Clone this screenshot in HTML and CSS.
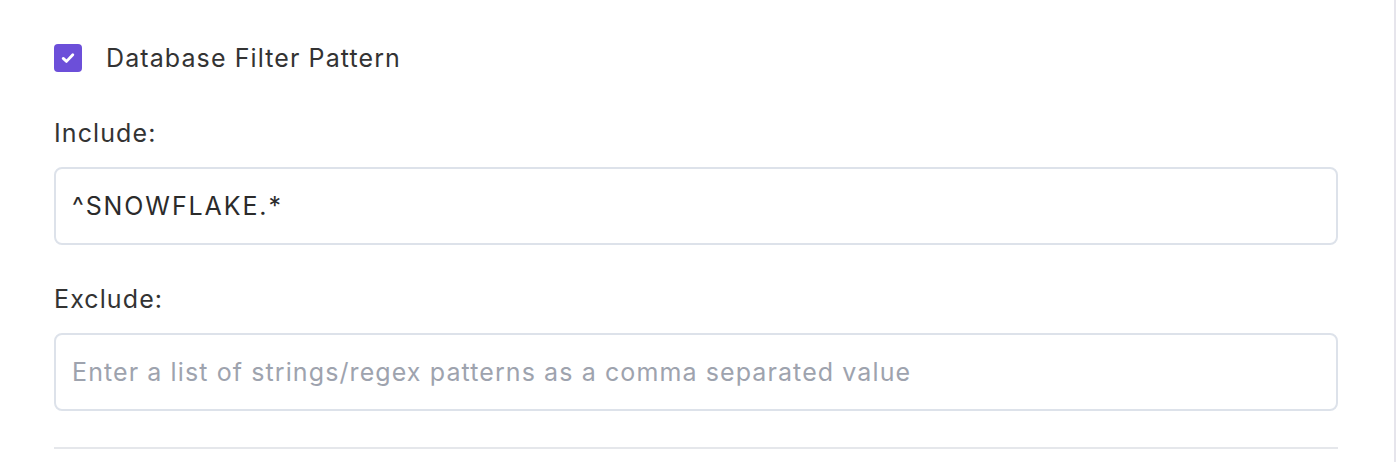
FILE: index.html
```html
<!DOCTYPE html>
<html>
<head>
<meta charset="utf-8">
<link rel="stylesheet" href="styles.css">
</head>
<body>
<div class="page">
  <div class="panel">
    <label class="check-row">
      <span class="checkbox">
        <svg width="16" height="16" viewBox="0 0 16 16"><path d="M3.2 8.4 L6.5 11.4 L12.8 4.8" fill="none" stroke="#fff" stroke-width="2.8" stroke-linecap="round" stroke-linejoin="round"/></svg>
      </span>
      <span class="check-label">Database Filter Pattern</span>
    </label>
    <div class="field">
      <div class="field-label">Include:</div>
      <div class="input"><span class="value">^SNOWFLAKE.*</span></div>
    </div>
    <div class="field">
      <div class="field-label">Exclude:</div>
      <div class="input"><span class="placeholder">Enter a list of strings/regex patterns as a comma separated value</span></div>
    </div>
    <div class="divider"></div>
  </div>
</div>
</body>
</html>
```
FILE: styles.css
```css
html, body {
  margin: 0;
  padding: 0;
  background: #ffffff;
}
body {
  font-family: Inter, "Liberation Sans", sans-serif;
  color: #333333;
  letter-spacing: 1.1px;
}
.page {
  width: 1394px;
  height: 462px;
  border-right: 2px solid #e6e5ec;
  box-sizing: content-box;
  overflow: hidden;
}
.panel {
  padding: 44px 56px 0 54px;
  display: flex;
  flex-direction: column;
}
.check-row {
  display: flex;
  align-items: center;
  gap: 24px;
  height: 28px;
}
.checkbox {
  width: 28px;
  height: 28px;
  border-radius: 4px;
  background: #6c4fd9;
  display: flex;
  align-items: center;
  justify-content: center;
}
.check-label {
  font-size: 25px;
  line-height: 28px;
  color: #333333;
}
.field {
  display: flex;
  flex-direction: column;
}
.field-label {
  font-size: 25px;
  line-height: 32px;
  margin-top: 45px;
  margin-bottom: 18px;
  color: #333333;
}
.field + .field .field-label {
  margin-top: 38px;
}
.input {
  height: 74px;
  border: 2px solid #dde2ea;
  border-radius: 8px;
  display: flex;
  align-items: center;
  padding: 0 16px;
  font-size: 25px;
}
.value {
  color: #2b2b2b;
  letter-spacing: 1.9px;
}
.placeholder {
  color: #9ea3ae;
}
.divider {
  margin-top: 36px;
  height: 2px;
  background: #e5e7eb;
}
```
